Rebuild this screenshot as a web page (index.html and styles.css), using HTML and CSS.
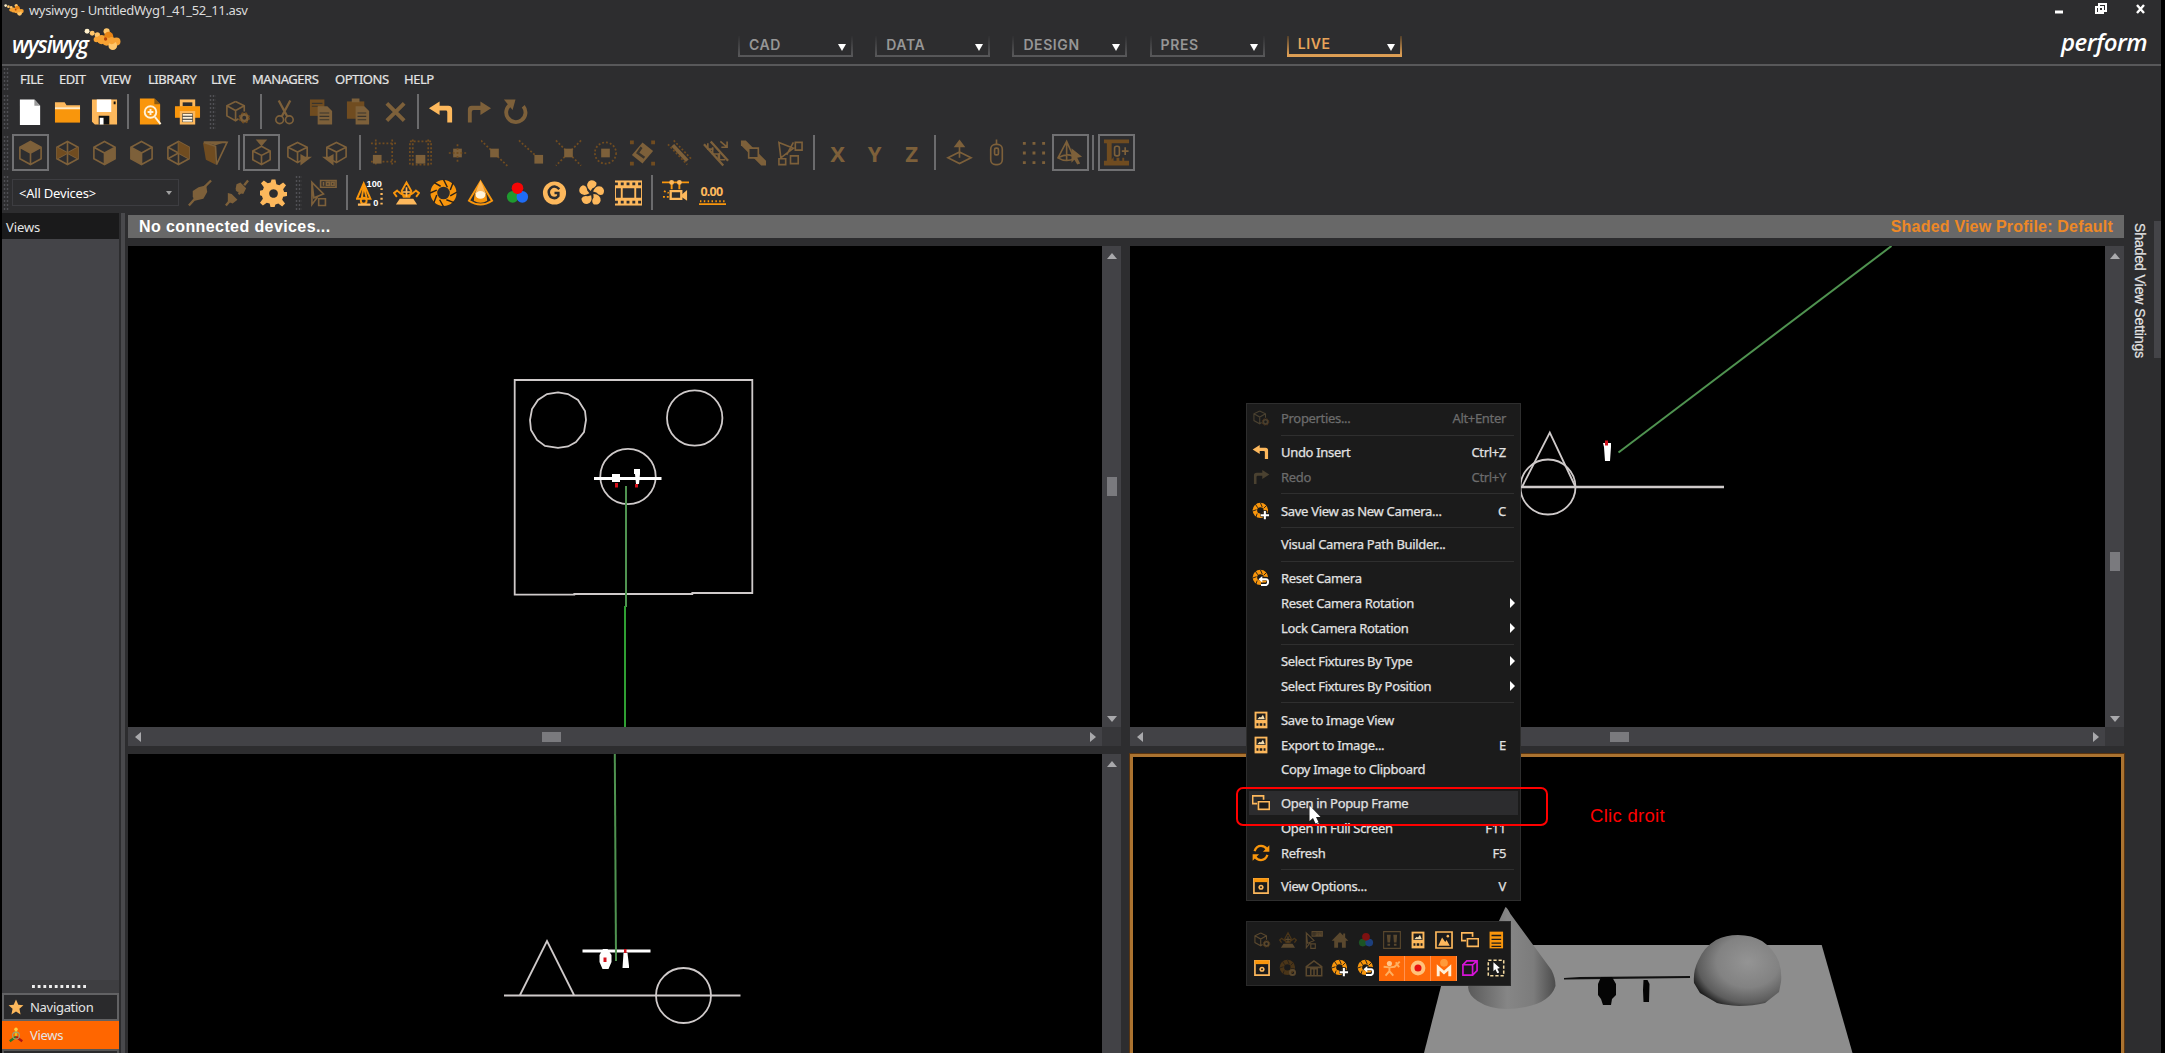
FILE: index.html
```html
<!DOCTYPE html>
<html lang="en">
<head>
<meta charset="utf-8">
<title>wysiwyg - UntitledWyg1_41_52_11.asv</title>
<link rel="stylesheet" href="styles.css">
</head>
<body>
<svg class="defs" aria-hidden="true">
  <symbol id="sparks" viewBox="0 0 36 22"><g><circle cx="3" cy="3" r="2.4" class="s1"/><circle cx="8" cy="5" r="2.4" class="s2"/><circle cx="13" cy="6.500" r="2.600" class="s2"/><circle cx="22" cy="3" r="3" class="s2"/><circle cx="17" cy="11" r="4.500" class="s3"/><circle cx="24" cy="8" r="4.500" class="s4"/><circle cx="31.500" cy="13" r="4" class="s3"/><circle cx="22" cy="13" r="4" class="s3"/><circle cx="28" cy="17" r="4.200" class="s2"/><circle cx="27" cy="12" r="3.500" class="s3"/><circle cx="12" cy="11" r="2.600" class="s3"/><circle cx="21" cy="10.500" r="1.600" class="s5"/></g></symbol>
  <symbol id="new" viewBox="0 0 28 28"><path class="w" d="M3 1h15l6 6.500v20H3z"/><path d="M18 1v6.500h6z" fill="#9a9a9a"/></symbol>
  <symbol id="open" viewBox="0 0 28 28"><path class="hi" d="M1 4h10l2 3h14v5H1z"/><path class="lo" d="M1 11.500h26V25H1z"/><path d="M1 10h26" stroke="#fff1d8" stroke-width="1.500"/></symbol>
  <symbol id="save" viewBox="0 0 28 28"><path class="hi" d="M1 1h26v26H4l-3-3z"/><path class="w" d="M6 1h15v13H6z"/><path d="M8 18h11v9H8zM23.500 3h2v3h-2z" fill="#111"/><path class="w" d="M9 20h4v7H9z"/></symbol>
  <symbol id="preview" viewBox="0 0 28 28"><path class="lo" d="M3 0h15l6 6v21H3z"/><path d="M18 0l6 6h-6z" fill="#8a5a14"/><circle cx="14" cy="14" r="6" class="sw"/><path class="sw" d="M11 14h6M14 11v6M18.500 19l6 7.500"/></symbol>
  <symbol id="print" viewBox="0 0 28 28"><path class="hi" d="M6 1h16v8H6z"/><path d="M9 4h10v4H9z" fill="#2d2d2f"/><path class="lo" d="M1 8h26v12H1z"/><path class="hi" d="M6 13h16v14H6z"/><path d="M8.500 15.500h11v9h-11z" fill="#2d2d2f"/><path class="sw" d="M9 17h10M9 20h10M9 23h10"/></symbol>
  <symbol id="cube" viewBox="0 0 28 28"><path class="sl" d="M14 2l11 6v12L14 26 3 20V8zM3 8l11 6 11-6M14 14v12"/></symbol>
  <symbol id="cubetop" viewBox="0 0 28 28"><use href="#cube"/><path class="hi" d="M14 2l11 6-11 6L3 8z"/></symbol>
  <symbol id="cuberight" viewBox="0 0 28 28"><use href="#cube"/><path class="hi" d="M14 14l11-6v12L14 26z"/></symbol>
  <symbol id="cubeleft" viewBox="0 0 28 28"><use href="#cube"/><path class="hi" d="M14 14L3 8v12l11 6z"/></symbol>
  <symbol id="cubeback" viewBox="0 0 28 28"><use href="#cube"/><path class="sl" d="M14 2v12L3 20M14 14l11 6"/><path class="lo" d="M3 8l11 6-11 6zM14 14l11-6v12z"/></symbol>
  <symbol id="cubeiso" viewBox="0 0 28 28"><use href="#cube"/><path class="sl" d="M14 2v12L3 20M14 14l11 6"/><path class="lo" d="M14 14V2l11 6v12z"/></symbol>
  <symbol id="persp" viewBox="0 0 28 28"><path class="lo" d="M1 3l13 4v19L4 21z"/><path class="hi" d="M1 2h25l-12 4z"/><path class="sl" d="M2 3h24L15 26l-1-19z"/></symbol>
  <symbol id="viewtop" viewBox="0 0 28 28"><path class="sl" d="M14 7l9 5v9l-9 5-9-5v-9zM5 12l9 4.500 9-4.500M14 16.500V26"/><path class="hi" d="M8 0h12l-6 7z"/></symbol>
  <symbol id="viewright" viewBox="0 0 28 28"><path class="sl" d="M13 3l10 5v10l-10 6-10-6V8zM3 8l10 5 10-5M13 13v10"/><path class="hi" d="M16 27V15l5 3h7z"/></symbol>
  <symbol id="viewleft" viewBox="0 0 28 28"><path class="sl" d="M15 3l10 5v10l-10 6-10-6V8zM5 8l10 5 10-5M15 13v10"/><path class="hi" d="M12 27V15l-5 3H0z"/></symbol>
  <symbol id="cubegear" viewBox="0 0 28 28"><path class="sl" d="M12 3l9 4.500v6M15 21l-3 2-9-5V7.500L12 3M3 7.500l9 5 9-5M12 12.500V23"/><circle cx="21" cy="20" r="3.500" class="sg"/><circle cx="21" cy="20" r="5" class="sd"/></symbol>
  <symbol id="cut" viewBox="0 0 28 28"><path class="sh" d="M8 2l9 17M20 2l-9 17"/><circle cx="9" cy="22" r="4" class="sl"/><circle cx="19" cy="22" r="4" class="sl"/></symbol>
  <symbol id="copy" viewBox="0 0 28 28"><path class="lo" d="M2 1h15v17H2z"/><path class="hi" d="M10 8h10l5 5v14H10z"/><path d="M12 15h10M12 18.500h10M12 22h10M4 5h11M4 8h6" stroke="#3a342c" stroke-width="1.200"/></symbol>
  <symbol id="paste" viewBox="0 0 28 28"><path class="lo" d="M2 3h18v18H2z"/><path class="hi" d="M7 0h8v4H7zM11 8h9l5 5v14H11z"/><path d="M13 15h9M13 18.500h9M13 22h9" stroke="#3a342c" stroke-width="1.200"/></symbol>
  <symbol id="del" viewBox="0 0 28 28"><path d="M5 5l18 18M23 5L5 23" class="sx"/></symbol>
  <symbol id="undo" viewBox="0 0 28 28"><path class="hi" d="M1 10l11-7v4.500h9q4 0 4 4V25h-5V14q0-1.500-1.500-1.500H12V17z"/></symbol>
  <symbol id="redo" viewBox="0 0 28 28"><path class="hi" d="M27 10L16 3v4.500H7q-4 0-4 4V25h4V14q0-2 2-2h7v5z"/></symbol>
  <symbol id="again" viewBox="0 0 28 28"><path d="M9 6A10 10 0 1 0 22 8" class="sx"/><path class="hi" d="M2 1h12l-3 11z"/></symbol>
  <symbol id="snapbox" viewBox="0 0 28 28"><path class="sd" d="M1 4h26M6 0v27M23 0v27M1 23h26"/><path class="hi" d="M3 16h9v9H3z"/></symbol>
  <symbol id="snapbox2" viewBox="0 0 28 28"><path class="sd" d="M3 2h22v24H3zM6 0v28M22 0v28"/><path class="hi" d="M9 16h10v9H9z"/></symbol>
  <symbol id="snappt" viewBox="0 0 28 28"><path class="hi" d="M9.500 9.500h9v9h-9z"/><path class="sd" d="M14 5v18M5 14h18"/></symbol>
  <symbol id="snapmid" viewBox="0 0 28 28"><path class="sd" d="M0 1l28 27"/><path class="hi" d="M9.500 9.500h9v9h-9z"/></symbol>
  <symbol id="snapend" viewBox="0 0 28 28"><path class="sd" d="M1 1l22 20"/><path class="hi" d="M17 16h9v9h-9z"/></symbol>
  <symbol id="snapx" viewBox="0 0 28 28"><path class="sd" d="M1 1l26 26M27 1L1 27"/><path class="hi" d="M9.500 9.500h9v9h-9z"/></symbol>
  <symbol id="snapc" viewBox="0 0 28 28"><circle cx="14" cy="14" r="11" class="sd"/><path class="hi" d="M9.500 9.500h9v9h-9z"/></symbol>
  <symbol id="layer" viewBox="0 0 28 28"><path class="hi" d="M14 3l11 9-11 13L3 16z"/><path d="M13 8l-4 6 7 5" fill="none" stroke="#3a342c" stroke-width="2.500"/><path class="lo" d="M1 1h4v4H1zM23 1h4v4h-4zM1 23h4v4H1zM23 23h4v4h-4z"/></symbol>
  <symbol id="dimline" viewBox="0 0 28 28"><path class="sx" d="M7 6l15 16"/><path class="sd" d="M2 5l20 21M8 1l19 20"/></symbol>
  <symbol id="truss" viewBox="0 0 28 28"><path class="sh" d="M1 5l20 22M8 2l18 20"/><path class="sl" d="M5 4v6h6M10 8v7h6v6M17 14v7h6M18 2l7 6M25 2v6h-6"/></symbol>
  <symbol id="joint" viewBox="0 0 28 28"><path class="hi" d="M1 1h5l21 21v5h-5L1 6z"/><path d="M9 9h10v10H9z" fill="#2d2d2f"/><path class="sl" d="M9 9h10v10H9z"/></symbol>
  <symbol id="selfix" viewBox="0 0 28 28"><path class="sl" d="M2 3l15 6L4 19zM17 3l-7 13M19 3h7v8h-7zM2 20h7v6H2zM14 17h8v8h-8z"/></symbol>
  <symbol id="normal" viewBox="0 0 28 28"><path class="sl" d="M14 13l12 6-12 6-12-6zM14 4v15"/><path class="hi" d="M14 0l6 8H8z"/></symbol>
  <symbol id="mouse" viewBox="0 0 28 28"><rect x="8" y="5" width="12" height="21" rx="5" class="sl"/><path class="sl" d="M14 0v5"/><rect x="12" y="9" width="4" height="7" rx="1.500" class="sl"/></symbol>
  <symbol id="dots" viewBox="0 0 28 28"><path class="dotgrid" d="M3 4h23M3 14h23M3 24h23"/></symbol>
  <symbol id="conesel" viewBox="0 0 28 28"><path class="sl" d="M10 2L1 19q8 5 17 1zM10 2v19M1 19q9-5 15-2"/><path class="hi" d="M15 9l11 9-5 1 3 6-3 1-3-5-3 3z"/></symbol>
  <symbol id="film0" viewBox="0 0 28 28"><path class="lo" d="M1 0h26v4H9v17l2-3v4h3v-3h3v3h3v-3h2v3h5v5H1v-5h3V4H1z"/><rect x="12" y="7" width="5" height="10" rx="2" class="sl"/><path class="sl" d="M19.500 12h7M23 8v8"/></symbol>
  <symbol id="plug" viewBox="0 0 28 28"><path class="sh" d="M3 27l8-9M18 9l8-8"/><path class="hi" d="M7 12l6-4 8-2 1 7-4 7-9 2-2-4z"/></symbol>
  <symbol id="unplug" viewBox="0 0 28 28"><path class="sh" d="M3 27l5-6M22 6l4-5M14 12l3-3M16 15l4-3"/><path class="hi" d="M5 14l4 1 6 6-5 4-5-2zM14 5l4-2 6 6-3 6-4-1-4-4z"/></symbol>
  <symbol id="gear" viewBox="0 0 28 28"><path class="hi" fill-rule="evenodd" d="M12 0h4l1 5 3 1 4-3 3 3-3 4 1 3 3 0v4l-4 1-1 3 3 4-3 3-4-3-3 1-1 3h-4l-1-4-3-1-4 3-3-3 3-4-1-3-3-1v-4l4-1 1-3-3-4 3-3 4 3 3-1zM14 10a4.500 4.500 0 1 0 .01 0z"/></symbol>
  <symbol id="sel100" viewBox="0 0 28 28"><path class="sl" d="M2 3l12 12-10 4zM2 3v23l6-8M9 20h7v7H9z"/><path class="sl" d="M11 1h16v7H11zM14 2.500v4M17 3h3v3h-3zM22 3h3v3h-3z"/></symbol>
  <symbol id="fix100" viewBox="0 0 28 28"><path class="so" d="M8 4L1 20h14zM6 19l2-12 3 12"/><circle cx="8" cy="22" r="3" class="so"/><path class="sh" d="M2 26h13"/><path d="M26.500 9v18" stroke-dasharray="2 3" class="sh"/></symbol>
  <symbol id="pantilt" viewBox="0 0 28 28"><path class="so" d="M14 3l5 9-2 6h-6l-2-6zM5 12q9 9 18 0M4 18l-3-4 4-3M24 18l3-4-4-3"/><path class="hi" d="M3 26l4-6h14l4 6z"/><path class="sl" d="M14 8v10M10 13h8"/></symbol>
  <symbol id="iris" viewBox="0 0 28 28"><circle cx="14" cy="14" r="10" class="ring"/><path class="cutl" d="M14 0l4 8M24 3l-3 8M28 13l-7 4M25 24l-8-3M14 28l-4-7M4 24l3-8M0 14l7-3M4 3l7 4"/></symbol>
  <symbol id="cone" viewBox="0 0 28 28"><path class="so" d="M14 2L2 22q12 8 24 0z"/><path class="hi" d="M14 1l6 14H8z"/><path class="lo" d="M8 15h12l1 7q-7 4-14 0z"/><ellipse cx="14" cy="16" rx="5" ry="4" fill="#fff3da"/></symbol>
  <symbol id="rgb" viewBox="0 0 28 28"><circle cx="9" cy="18" r="6" fill="#1f9a2f"/><circle cx="19" cy="18" r="6" fill="#1f6cf5"/><circle cx="14" cy="9" r="6" fill="#f50505"/></symbol>
  <symbol id="gobo" viewBox="0 0 28 28"><circle cx="14" cy="14" r="12" class="hi"/><path d="M19 10q-5-5-9-1t0 9q5 3 8-1v-3h-4" fill="none" stroke="#2d2d2f" stroke-width="2.600"/></symbol>
  <symbol id="fan" viewBox="0 0 28 28"><path id="blade" class="hi" d="M13 12Q7 7 11 2q4-3 8 1 1 4-4 6z"/><use href="#blade" transform="rotate(72 14 14)"/><use href="#blade" transform="rotate(144 14 14)"/><use href="#blade" transform="rotate(216 14 14)"/><use href="#blade" transform="rotate(288 14 14)"/></symbol>
  <symbol id="film" viewBox="0 0 28 28"><path class="hi" d="M0 1h28v26H0z"/><path d="M0 4.500h28M0 23.500h28" stroke="#2d2d2f" stroke-width="3" stroke-dasharray="3 3"/><path d="M1 9h5v10H1zM8 9h12v10H8zM22 9h5v10h-5z" fill="#2d2d2f"/></symbol>
  <symbol id="camrail" viewBox="0 0 28 28"><path class="so" d="M0 3h28M10 3v7M18 3v7"/><circle cx="10" cy="3" r="2.500" class="hi"/><circle cx="18" cy="3" r="2.500" class="hi"/><path class="sh" d="M9 12h11v8H9z"/><path class="hi" d="M20 16l6-5v11l-6-4z"/><path class="sd" d="M2 12l5 2M1 18l6 0"/></symbol>
  <symbol id="meter" viewBox="0 0 28 28"><path class="so" d="M0 25.500h28"/><path d="M1 22.500h27" class="so" stroke-dasharray="1.500 2.500"/></symbol>
  <symbol id="cam" viewBox="0 0 28 28"><circle cx="13" cy="13" r="8.500" class="ring"/><path class="cutl" d="M13 1l3 7M23 5l-5 5M24 15l-6 0M6 24l2-6M1 14l6-2M5 3l4 6"/></symbol>
  <symbol id="camplus" viewBox="0 0 28 28"><use href="#cam"/><path d="M20 13v14M13 20h14" stroke="#1b1b1b" stroke-width="6"/><path d="M20 14v13M13.500 20.500h13" stroke="#fff" stroke-width="3.200"/></symbol>
  <symbol id="camreset" viewBox="0 0 28 28"><use href="#cam"/><path d="M14 15h8q4 0 4 4t-4 5h-8" fill="none" stroke="#1b1b1b" stroke-width="6"/><path d="M14 16h8q3 0 3 4t-3 5h-8" fill="none" stroke="#fff" stroke-width="3"/><path d="M10 16l6-5v10z" fill="#fff"/></symbol>
  <symbol id="camgear" viewBox="0 0 28 28"><use href="#cam"/><circle cx="21" cy="21" r="4" class="sg"/></symbol>
  <symbol id="image" viewBox="0 0 28 28"><path class="hi" d="M4 1h20v26H4z"/><path d="M7 4h14v10H7zM7 19h3v4H7zM12 19h4v4h-4zM18 19h3v4h-3z" fill="#1b1b1b"/><path d="M8 13l4-4 2 1 3-4 3 7z" fill="#f2dcae"/></symbol>
  <symbol id="popup" viewBox="0 0 28 28"><path d="M1 3h17v12H1z" class="win"/><path d="M8 9h20v17H8z" fill="#1b1b1b"/><path d="M10 12h17v12H10z" class="win"/></symbol>
  <symbol id="refresh" viewBox="0 0 28 28"><path class="rf" d="M4 11q3-8 10-8 6 0 9 5M24 17q-3 8-10 8-6 0-9-5"/><path class="lo" d="M27 2v10H17zM1 26V16h10z"/></symbol>
  <symbol id="opts" viewBox="0 0 28 28"><path class="win" d="M3 3h22v22H3z"/><path class="lo" d="M3 2h22v6H3z"/><circle cx="14" cy="16" r="4" class="hi"/><circle cx="14" cy="16" r="1.500" fill="#1b1b1b"/></symbol>
  <symbol id="home" viewBox="0 0 28 28"><path class="hi" d="M14 2L1 15h4v11h6v-8h6v8h6V15h4l-5-5V4h-3v3z"/></symbol>
  <symbol id="home2" viewBox="0 0 28 28"><path class="sh" d="M14 3L2 12v14h24V12zM9 26V15h10v11M14 15v11M2 13h24"/></symbol>
  <symbol id="boots" viewBox="0 0 28 28"><path d="M1 1h26v26H1z" class="sl"/><path class="hi" d="M6 6h6l-1 12H7zM16 6h6l-1 12h-4zM7 20h4v3H7zM17 20h4v3h-4z"/></symbol>
  <symbol id="photo" viewBox="0 0 28 28"><path class="win" d="M1.500 1.500h25v25h-25z"/><path class="hi" d="M5 23l6-13 5 7 2-3 5 9z"/><circle cx="20" cy="8" r="2" class="hi"/></symbol>
  <symbol id="list" viewBox="0 0 28 28"><path class="lo" d="M4 1h21v26H4z"/><path d="M7 7h15M7 13h15M7 19h15M7 24h15" stroke="#1b1b1b" stroke-width="2"/></symbol>
  <symbol id="man" viewBox="0 0 28 28"><circle cx="10" cy="7" r="4" fill="#ffc58a"/><path d="M1 12l9 1 9-1M10 12v7l-6 7M10 19l6 7M18 12l8-8M20 5l5 8" fill="none" stroke="#ffb061" stroke-width="3"/></symbol>
  <symbol id="target" viewBox="0 0 28 28"><circle cx="14" cy="14" r="8.500" fill="#e81010" stroke="#ffc27a" stroke-width="6"/></symbol>
  <symbol id="emm" viewBox="0 0 28 28"><circle cx="14" cy="6" r="6" fill="#ff9a3a"/><path d="M5 27V13l9 8 9-8v14" fill="none" stroke="#fff0d8" stroke-width="4.500"/></symbol>
  <symbol id="box3d" viewBox="0 0 28 28"><path d="M3 9h15v16H3zM3 9l6-6h16v15l-7 7M18 9l7-6" fill="none" stroke="#d713d7" stroke-width="2.600"/></symbol>
  <symbol id="marquee" viewBox="0 0 28 28"><path d="M2 2h24v24H2z" fill="none" stroke="#f3d9a0" stroke-width="2.400" stroke-dasharray="5 3"/><path d="M10 5l10 9-4 1 3 6-3 1-3-6-3 3z" fill="#fff"/></symbol>
  <symbol id="star" viewBox="0 0 28 28"><path class="hi" d="M14 1l4 9 9 1-7 6 2 10-8-5-8 5 2-10-7-6 9-1z"/></symbol>
  <symbol id="axes" viewBox="0 0 28 28"><path d="M14 4v13" stroke="#e8c020" stroke-width="4"/><path d="M14 17L3 25" stroke="#287a28" stroke-width="4"/><path d="M14 17l11 8" stroke="#b31616" stroke-width="4"/><circle cx="14" cy="15" r="6" fill="none" stroke="#a0a070" stroke-width="2"/><circle cx="14" cy="4" r="3" fill="#ffd040"/></symbol>
</svg>

<div class="app">
  <header class="titlebar">
    <svg class="appicon"><use href="#sparks"/></svg>
    <span class="title">wysiwyg - UntitledWyg1_41_52_11.asv</span>
    <svg class="winctl" viewBox="0 0 100 20"><path d="M3 12h8" stroke="#fff" stroke-width="3"/><path d="M47 4h7v7h-7z M44 7h7v6h-7z" fill="#2d2d2f" stroke="#fff" stroke-width="2"/><path d="M85 5l7 8M92 5l-7 8" stroke="#fff" stroke-width="2.400"/></svg>
  </header>
  <div class="brandbar">
    <div class="logo"><span>wysiwyg</span><svg><use href="#sparks"/></svg></div>
    <nav class="modes">
      <div class="mode"><span>CAD</span><i></i></div>
      <div class="mode"><span>DATA</span><i></i></div>
      <div class="mode"><span>DESIGN</span><i></i></div>
      <div class="mode"><span>PRES</span><i></i></div>
      <div class="mode on"><span>LIVE</span><i></i></div>
    </nav>
    <span class="perform">perform</span>
  </div>
  <nav class="menubar"><b class="grip"></b><span class="m1">FILE</span><span class="m2">EDIT</span><span class="m3">VIEW</span><span class="m4">LIBRARY</span><span class="m5">LIVE</span><span class="m6">MANAGERS</span><span class="m7">OPTIONS</span><span class="m8">HELP</span></nav>

  <div class="tools">
    <div class="bar first">
      <b class="grip"></b>
      <a><svg><use href="#new"/></svg></a><a><svg><use href="#open"/></svg></a><a><svg><use href="#save"/></svg></a><hr>
      <a><svg><use href="#preview"/></svg></a><a><svg><use href="#print"/></svg></a><b class="grip mid"></b>
      <a class="dim"><svg><use href="#cubegear"/></svg></a><hr>
      <a class="dim"><svg><use href="#cut"/></svg></a><a class="dim"><svg><use href="#copy"/></svg></a><a class="dim"><svg><use href="#paste"/></svg></a><a class="dim"><svg><use href="#del"/></svg></a><hr>
      <a><svg><use href="#undo"/></svg></a><a class="dim"><svg><use href="#redo"/></svg></a><a class="dim"><svg><use href="#again"/></svg></a>
    </div>
    <div class="bar dim">
      <b class="grip"></b>
      <a class="box"><svg><use href="#cubetop"/></svg></a><a><svg><use href="#cubeback"/></svg></a><a><svg><use href="#cuberight"/></svg></a><a><svg><use href="#cubeleft"/></svg></a><a><svg><use href="#cubeiso"/></svg></a><a><svg><use href="#persp"/></svg></a><hr>
      <a class="box"><svg><use href="#viewtop"/></svg></a><a><svg><use href="#viewright"/></svg></a><a><svg><use href="#viewleft"/></svg></a><hr class="wide">
      <a><svg><use href="#snapbox"/></svg></a><a><svg><use href="#snapbox2"/></svg></a><a><svg><use href="#snappt"/></svg></a><a><svg><use href="#snapmid"/></svg></a><a><svg><use href="#snapend"/></svg></a><a><svg><use href="#snapx"/></svg></a><a><svg><use href="#snapc"/></svg></a><a><svg><use href="#layer"/></svg></a><a><svg><use href="#dimline"/></svg></a><a><svg><use href="#truss"/></svg></a><a><svg><use href="#joint"/></svg></a><a><svg><use href="#selfix"/></svg></a><hr class="wide">
      <a class="axis">X</a><a class="axis">Y</a><a class="axis">Z</a><hr class="wide">
      <a><svg><use href="#normal"/></svg></a><a><svg><use href="#mouse"/></svg></a><a><svg><use href="#dots"/></svg></a><a class="box"><svg><use href="#conesel"/></svg></a><hr>
      <a class="box"><svg><use href="#film0"/></svg></a>
    </div>
    <div class="bar">
      <b class="grip"></b>
      <div class="combo"><span>&lt;All Devices&gt;</span><i></i></div>
      <a class="dim"><svg><use href="#plug"/></svg></a><a class="dim"><svg><use href="#unplug"/></svg></a><a><svg><use href="#gear"/></svg></a><b class="grip mid"></b>
      <a class="dim"><svg><use href="#sel100"/></svg></a><hr>
      <a><svg viewBox="0 0 28 28"><use href="#fix100"/><text x="11" y="7.500" class="tiny">100</text><text x="18" y="27" class="tiny">0</text></svg></a><a><svg><use href="#pantilt"/></svg></a><a><svg><use href="#iris"/></svg></a><a><svg><use href="#cone"/></svg></a><a><svg><use href="#rgb"/></svg></a><a><svg><use href="#gobo"/></svg></a><a><svg><use href="#fan"/></svg></a><a><svg><use href="#film"/></svg></a><hr>
      <a><svg><use href="#camrail"/></svg></a><a><svg viewBox="0 0 28 28"><use href="#meter"/><text x="1.500" y="17" class="num">0.00</text></svg></a>
    </div>
  </div>

  <div class="work">
    <aside class="side">
      <h2>Views</h2>
      <div class="tree"></div>
      <div class="handle"></div>
      <div class="sidebtn"><svg><use href="#star"/></svg>Navigation</div>
      <div class="sidebtn active"><svg><use href="#axes"/></svg>Views</div>
      <div class="sidefoot"></div>
    </aside>
    <div class="split"></div>
    <main class="stage">
      <div class="status"><span>No connected devices...</span><span class="profile">Shaded View Profile: Default</span></div>
      <div class="panes">
        <section class="pane">
          <svg class="view" viewBox="128 246 974 481">
            <g class="wire"><path d="M514.700 594.500V380h237.600v213h-60v1h-118v.700z"/><polygon points="558,392.300 568,394 578,400 585,411 586,420 584,432 576,442 568,446.500 558,447.800 545,446 537,440 531,430 530,420 532,409 538,400 547,394"/><circle cx="694.700" cy="418" r="27.700"/><circle cx="628" cy="476.500" r="27.700"/></g>
            <path d="M594 478.500h67.500" stroke="#fff" stroke-width="3"/><path d="M612 474h8v8h-8zM634 469h6v5l-1 10h-3l-1-10h-1z" fill="#fff"/><path d="M615 483h3v4.500h-3zM635 484h3v3.500h-3z" fill="#d3121c"/>
            <path d="M626 486v121" class="g1"/><path d="M625 606v121" class="g2"/>
          </svg>
          <div class="vs"><i class="up"></i><i class="thumb t1"></i><i class="dn"></i></div>
          <div class="hs"><i class="lf"></i><i class="thumb t2"></i><i class="rt"></i></div>
          <div class="corner"></div>
        </section>
        <section class="pane">
          <svg class="view" viewBox="1130 246 974 481">
            <g class="wire"><circle cx="1547.500" cy="487" r="27.500"/><path d="M1521.500 487l27.800-54.500L1575 487"/></g>
            <path d="M1500 487h223.500" stroke="#cfcaca" stroke-width="2.600"/>
            <path d="M1602.500 443h8v4l-1 14h-5l-1-14z" fill="#fff"/><path d="M1604.500 440.500h3v5h-3z" fill="#d3121c"/>
            <path d="M1618 452.500L1891 246" class="g1"/>
          </svg>
          <div class="vs"><i class="up"></i><i class="thumb t3"></i><i class="dn"></i></div>
          <div class="hs"><i class="lf"></i><i class="thumb t4"></i><i class="rt"></i></div>
          <div class="corner"></div>
        </section>
        <section class="pane low">
          <svg class="view" viewBox="128 754 974 299">
            <g class="wire"><path d="M504 995.500h236.500M520 995l27-54 27 54"/><circle cx="683.500" cy="995.500" r="27.500"/></g>
            <path d="M582.500 951h68" stroke="#fff" stroke-width="3"/>
            <path d="M603 949h4.500l4 6v7l-3 7h-6l-3-7v-7zM623.500 953h4l1.500 13v2h-6.500z" fill="#fff"/>
            <path d="M603.500 957.500h3v4.500h-3zM624 949h2.500v4H624z" fill="#d3121c"/>
            <path d="M614.800 754l1.200 207" class="g1"/>
          </svg>
          <div class="vs"><i class="up"></i></div>
        </section>
        <section class="pane low focus">
          <svg class="view" viewBox="1133 757 988 296">
            <defs>
              <linearGradient id="coneg"><stop offset="0" stop-color="#5a5a5a"/><stop offset=".45" stop-color="#868686"/><stop offset=".75" stop-color="#7c7c7c"/><stop offset="1" stop-color="#4c4c4c"/></linearGradient>
              <radialGradient id="sphg" cx=".62" cy=".38" r=".72"><stop offset="0" stop-color="#949494"/><stop offset=".5" stop-color="#828282"/><stop offset=".8" stop-color="#5c5c5c"/><stop offset="1" stop-color="#0c0c0c"/></radialGradient>
            </defs>
            <path d="M1451.500 945h370.200l30.800 108H1424z" fill="#8d8d8d"/>
            <path d="M1505.500 907q2 1 5 7l41 56q4 8 4 16-5 16-30 21-30 6-48-6-9-6-9.500-14z" fill="url(#coneg)"/>
            <path d="M1564 978l16-1 110-1v2l-126 1.500z" fill="#111"/>
            <path d="M1601 977h11l4 7v11l-4 4-1 6h-8l-2-6-3-4v-11zM1643.500 980l4 0 2 4-.5 18h-5.500l-.5-12z" fill="#050505"/>
            <path d="M1738 935q14 0 24 6 12 8 17 21 3 10 2 20l-2 10-14 11q-12 3-26 3-14-1-22-3l-17-10-6-10q-1-12 4-22 6-14 18-21 10-5 22-5z" fill="url(#sphg)"/>
          </svg>
        </section>
      </div>
    </main>
    <aside class="dock"><span>Shaded View Settings</span></aside>
  </div>
</div>

<div class="ctx">
  <div class="it off"><svg><use href="#cubegear"/></svg><span>Properties...</span><kbd>Alt+Enter</kbd></div>
  <hr>
  <div class="it"><svg><use href="#undo"/></svg><span>Undo Insert</span><kbd>Ctrl+Z</kbd></div>
  <div class="it off"><svg><use href="#redo"/></svg><span>Redo</span><kbd>Ctrl+Y</kbd></div>
  <hr>
  <div class="it"><svg><use href="#camplus"/></svg><span>Save View as New Camera...</span><kbd>C</kbd></div>
  <hr>
  <div class="it"><svg></svg><span>Visual Camera Path Builder...</span></div>
  <hr>
  <div class="it"><svg><use href="#camreset"/></svg><span>Reset Camera</span></div>
  <div class="it"><svg></svg><span>Reset Camera Rotation</span><i></i></div>
  <div class="it"><svg></svg><span>Lock Camera Rotation</span><i></i></div>
  <hr>
  <div class="it"><svg></svg><span>Select Fixtures By Type</span><i></i></div>
  <div class="it"><svg></svg><span>Select Fixtures By Position</span><i></i></div>
  <hr>
  <div class="it"><svg><use href="#image"/></svg><span>Save to Image View</span></div>
  <div class="it"><svg><use href="#image"/></svg><span>Export to Image...</span><kbd>E</kbd></div>
  <div class="it"><svg></svg><span>Copy Image to Clipboard</span></div>
  <hr class="clear">
  <div class="it hot"><svg><use href="#popup"/></svg><span>Open in Popup Frame</span></div>
  <div class="it"><svg></svg><span>Open in Full Screen</span><kbd>F11</kbd></div>
  <div class="it"><svg><use href="#refresh"/></svg><span>Refresh</span><kbd>F5</kbd></div>
  <hr>
  <div class="it"><svg><use href="#opts"/></svg><span>View Options...</span><kbd>V</kbd></div>
</div>

<div class="mini">
  <a class="dim"><svg><use href="#cubegear"/></svg></a><a class="dim"><svg><use href="#pantilt"/></svg></a><a class="dim"><svg><use href="#sel100"/></svg></a><a class="dim"><svg><use href="#home"/></svg></a><a class="faint"><svg><use href="#rgb"/></svg></a><a class="dim"><svg><use href="#boots"/></svg></a><a><svg><use href="#image"/></svg></a><a><svg><use href="#photo"/></svg></a><a><svg><use href="#popup"/></svg></a><a><svg><use href="#list"/></svg></a>
  <a><svg><use href="#opts"/></svg></a><a class="dim"><svg><use href="#camgear"/></svg></a><a class="dim"><svg><use href="#home2"/></svg></a><a><svg><use href="#camplus"/></svg></a><a><svg><use href="#camreset"/></svg></a><a class="lit"><svg><use href="#man"/></svg></a><a class="lit"><svg><use href="#target"/></svg></a><a class="lit"><svg><use href="#emm"/></svg></a><a><svg><use href="#box3d"/></svg></a><a><svg><use href="#marquee"/></svg></a>
</div>

<svg class="cursor" viewBox="0 0 12 19"><path d="M.5.500v15.500l3.500-3 2.500 5.500 3-1.200-2.500-5.300h4.500z" fill="#fff"/></svg>
<div class="callout"></div>
<div class="note">Clic droit</div>
</body>
</html>
```
FILE: styles.css
```css
* { box-sizing: border-box; }
html, body { margin: 0; height: 100%; background: #000; overflow: hidden; }
body { position: relative; font-family: "Noto Sans", "Liberation Sans", sans-serif; color: #e4e4e4; --hi: #fdb85c; --lo: #f9960c; }
.dim { --hi: #7d603a; --lo: #704c20; }
.defs { position: absolute; width: 0; height: 0; }
svg { display: block; }

/* icon tones */
.hi { fill: var(--hi); }
.lo { fill: var(--lo); }
.w { fill: #fff; }
.sl, .sh, .so, .sg, .sd, .sx, .sw, .win, .rf, .ring { fill: none; }
.sl { stroke: var(--hi); stroke-width: 1.7; }
.sh { stroke: var(--hi); stroke-width: 2.4; }
.so { stroke: var(--lo); stroke-width: 2; }
.sg { stroke: var(--hi); stroke-width: 3; }
.sd { stroke: var(--lo); stroke-width: 1.8; stroke-dasharray: 2 2; }
.sx { stroke: var(--hi); stroke-width: 4; }
.sw { stroke: #fff1d8; stroke-width: 2; }
.win { stroke: var(--hi); stroke-width: 2.6; }
.rf { stroke: var(--lo); stroke-width: 3.6; }
.ring { stroke: var(--lo); stroke-width: 7; }
.cutl { stroke: #2a2118; stroke-width: 1.5; fill: none; }
.dotgrid { stroke: var(--hi); stroke-width: 3; stroke-dasharray: 3 7; }
.tiny { font: bold 9.5px "Liberation Sans", sans-serif; fill: #fff; }
.num { font: bold 13px "Noto Sans", sans-serif; fill: var(--hi); letter-spacing: -.8px; }
.s1 { fill: #fff0cc; } .s2 { fill: #ffc66a; } .s3 { fill: #f7a233; } .s4 { fill: #e88414; } .s5 { fill: #b3430a; }

.app { width: 2161px; height: 1053px; padding-left: 2px; display: flex; flex-direction: column; background: #2d2d2f; box-shadow: inset 2px 0 #000; }

.titlebar { height: 20px; display: flex; align-items: center; padding: 0 9px 0 2px; }
.appicon { width: 20px; height: 14px; }
.title { font-size: 13px; margin-left: 5px; letter-spacing: -.35px; color: #dcdcdc; flex: 1; }
.winctl { width: 100px; height: 20px; overflow: visible; }

.brandbar { height: 46px; border-bottom: 2px solid #58585a; display: flex; align-items: flex-start; }
.logo { width: 220px; flex: none; display: flex; padding-left: 10px; height: 44px; }
.logo span, .perform { font: italic 600 24px/30px "Open Sans", sans-serif; color: #fff; }
.logo span { width: 76px; padding-top: 10px; font-size: 22.5px; letter-spacing: -1.2px; }
.logo svg { width: 37px; height: 23px; flex: none; margin: 8px 0 0 -4px; }
.perform { width: 100px; margin-left: auto; padding-top: 7px; letter-spacing: -.5px; }
.modes { display: flex; gap: 22.2px; margin: 16px 0 0 516px; }
.mode { width: 115px; height: 21px; border: 2px solid; border-top: 0; border-image: linear-gradient(transparent, #58585a) 1; display: flex; justify-content: space-between; align-items: center; padding: 0 5px 2px 9px; font: 600 14px/16px Inter, sans-serif; letter-spacing: .6px; color: #969696; }
.mode i { border: 4px solid transparent; border-top: 7px solid #fff; border-bottom: 0; margin-top: 6px; }
.mode.on { color: #e8a45a; border-image: linear-gradient(#4a3a28, #e0a055) 1; border-bottom-width: 3px; }

.grip { display: block; width: 6px; align-self: stretch; margin: 1px 3px 1px 1px; background: radial-gradient(circle, #505055 .8px, transparent 1.2px) 0 0 / 3px 4px; }
.grip.mid { width: 7px; margin: 1px 3px 1px 3px; }
.menubar { height: 25px; display: flex; align-items: center; font-size: 13px; -webkit-text-stroke: .2px; }
.menubar span { letter-spacing: -.45px; white-space: nowrap; }
.m1 { width: 39px; margin-left: 8px; } .m2 { width: 42px; } .m3 { width: 47px; } .m4 { width: 63px; } .m5 { width: 41px; } .m6 { width: 83px; } .m7 { width: 69px; }

.tools { height: 122px; padding-top: 2px; display: flex; flex-direction: column; gap: 3px; }
.bar { height: 37px; display: flex; align-items: center; }
.bar.first { margin-bottom: 1px; }
.bar a { width: 37px; height: 37px; display: flex; align-items: center; justify-content: center; flex: none; }
.bar a svg { width: 27px; height: 28px; }
.bar a.box { border: 2px solid #707072; }
.bar hr { width: 2px; height: 35px; border: 0; background: #6b6b6d; margin: 0 3.7px; flex: none; }
.bar hr.wide { margin: 0 4.200px; }
.bar .axis { font: bold 22px/28px "Noto Sans", sans-serif; color: var(--hi); }
.combo { width: 167px; height: 27px; margin-right: 2px; border: 1.5px solid #3d3d41; display: flex; align-items: center; justify-content: space-between; padding: 0 6px; font-size: 13px; letter-spacing: -.2px; color: #fff; }
.combo i { border: 3.5px solid transparent; border-top: 4px solid #a0a0a0; border-bottom: 0; }

.work { flex: 1; display: flex; min-height: 0; }
.side { width: 117px; display: flex; flex-direction: column; }
.side h2 { margin: 0; height: 26px; background: #1a1a1b; font: 400 13px/29px "Noto Sans", sans-serif; padding-left: 4px; letter-spacing: -.1px; }
.tree { flex: 1; background: #444448; }
.handle { height: 13px; padding: 0 31px 0 30px; background: radial-gradient(circle at 1.500px 50%, #eee 1.500px, transparent 1.800px) 0 0 / 5.700px 13px repeat-x content-box, #3e3e41; }
.sidebtn { height: 28px; border: 2px solid #626264; background: #2a2a2c; display: flex; align-items: center; gap: 6px; padding-left: 4px; font-size: 13px; letter-spacing: -.3px; }
.sidebtn svg { width: 16px; height: 16px; }
.sidebtn.active { background: #ff6600; border-color: #ff6600; }
.sidefoot { height: 4px; border: 2px solid #555; border-bottom: 0; background: #2a2a2c; }
.split { width: 9px; background: linear-gradient(90deg, #2d2d2f 0 2px, #49494c 2px 6px, #2d2d2f 6px); }

.stage { width: 1996px; padding-top: 2px; display: flex; flex-direction: column; }
.status { height: 23px; margin-bottom: 8px; background: #686868; display: flex; justify-content: space-between; align-items: center; padding: 1px 11px 0; font: bold 16px/22px "Liberation Sans", sans-serif; color: #fff; letter-spacing: .4px; }
.profile { color: #ee8826; letter-spacing: .2px; }
.panes { flex: 1; display: grid; grid-template-columns: 993px 994px; grid-template-rows: 500px 1fr; gap: 8px 9px; min-height: 0; }
.pane { display: grid; grid-template-columns: 1fr 19px; grid-template-rows: 1fr 19px; background: #000; min-height: 0; }
.pane.low { grid-template-rows: 1fr; }
.pane.focus { grid-template-columns: 1fr; border: 3px solid #ab7330; border-bottom: 0; box-shadow: 0 0 0 1px #5a3510; }
.view { width: 100%; height: 100%; }
.wire { fill: none; stroke: #cfcaca; stroke-width: 1.8; }
.g1 { stroke: #4f9350; stroke-width: 2; }
.g2 { stroke: #2f9f33; stroke-width: 2; }
.vs, .hs { background: #424246; display: flex; align-items: center; position: relative; }
.vs { flex-direction: column; justify-content: space-between; padding: 7px 0 5px; }
.hs { justify-content: space-between; padding: 0 6px 0 7px; }
.corner { background: #37373a; }
.up, .dn, .lf, .rt { border: 5px solid transparent; }
.up { border-bottom: 6px solid #a9a9ac; border-top: 0; }
.dn { border-top: 6px solid #a9a9ac; border-bottom: 0; }
.lf { border-right: 6px solid #a9a9ac; border-left: 0; }
.rt { border-left: 6px solid #a9a9ac; border-right: 0; }
.thumb { position: absolute; background: #7a7a7e; width: 10px; height: 19px; }
.hs .thumb { width: 19px; height: 10px; }
.t1 { top: 231px; } .t3 { top: 306px; } .t2 { left: 414px; } .t4 { left: 480px; }

.dock { flex: 1; display: flex; justify-content: space-between; padding: 8px 0 0 7px; }
.dock span { writing-mode: vertical-rl; font: 14px/18px "Liberation Sans", sans-serif; letter-spacing: -.08px; height: 137px; white-space: nowrap; padding-top: 2px; -webkit-text-stroke: .2px; }
.dock::after { content: ""; width: 7px; height: 137px; background: #444448; }

.ctx { position: absolute; left: 1246px; top: 403px; width: 275px; height: 498px; padding: 2px 2px; background: #1b1b1b; border: 1px solid #2e2e2e; }
.it { height: 24.8px; display: flex; align-items: center; padding: 0 12px 0 3px; font-size: 13px; letter-spacing: -.32px; -webkit-text-stroke: .25px; color: #e2e2e2; white-space: nowrap; }
.it svg { width: 18px; height: 18px; margin-right: 11px; }
.it span { flex: 1; }
.it kbd { font: inherit; }
.it i { border: 5px solid transparent; border-left: 5px solid #fff; border-right: 0; margin-right: -9px; }
.it.off { color: #6c6c6c; --hi: #4a4130; --lo: #4a3018; }
.it.hot { background: #2c2c2e; }
.ctx hr { height: 1px; margin: 4px 4px 3.9px 32px; border: 0; background: #2f2f2f; }
.ctx hr.clear { background: none; }

.mini { position: absolute; left: 1246px; top: 921px; width: 265px; height: 65px; padding: 4px 1px 2px 2px; background: #1b1b1b; border: 1px solid #2a2a2a; display: grid; grid-template-columns: repeat(10, 26px); grid-template-rows: 27px 30px; align-items: center; }
.mini a { height: 25px; display: flex; align-items: center; justify-content: center; }
.mini a svg { width: 18px; height: 18px; }
.mini .dim { --hi: #5a482e; --lo: #4a3518; }
.mini .faint { opacity: .45; }
.mini .lit { background: #ff6a08; border-right: 1px solid #ff9350; }

.cursor { position: absolute; left: 1309px; top: 805px; width: 12px; height: 19px; }
.callout { position: absolute; left: 1236px; top: 787px; width: 312px; height: 39px; border: 2px solid #f00; border-radius: 7px; }
.note { position: absolute; left: 1590px; top: 805px; font: 18.500px/22px "Liberation Sans", sans-serif; color: #f00; letter-spacing: .3px; white-space: nowrap; }
```
